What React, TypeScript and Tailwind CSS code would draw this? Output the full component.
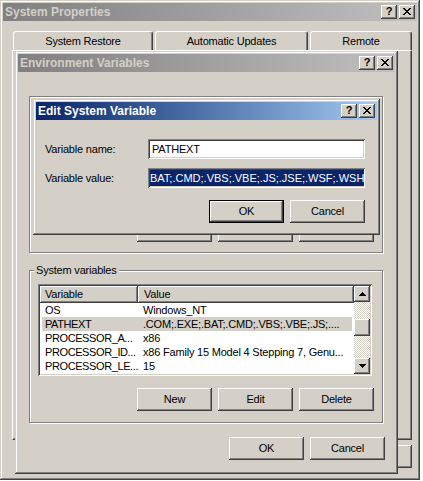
import React from "react";

const raised =
  "shadow-[inset_-1px_-1px_#404040,inset_1px_1px_#ffffff,inset_-2px_-2px_#808080,inset_2px_2px_#d4d0c8]";
const frame =
  "shadow-[inset_-1px_-1px_#404040,inset_1px_1px_#d4d0c8,inset_-2px_-2px_#808080,inset_2px_2px_#ffffff]";
const sunken =
  "shadow-[inset_1px_1px_#808080,inset_-1px_-1px_#ffffff,inset_2px_2px_#404040,inset_-2px_-2px_#d4d0c8]";

function CloseGlyph() {
  return (
    <svg width="8" height="7" viewBox="0 0 8 7" shapeRendering="crispEdges">
      <g fill="#000">
        <rect x="0" y="0" width="2" height="1" />
        <rect x="6" y="0" width="2" height="1" />
        <rect x="1" y="1" width="2" height="1" />
        <rect x="5" y="1" width="2" height="1" />
        <rect x="2" y="2" width="4" height="1" />
        <rect x="3" y="3" width="2" height="1" />
        <rect x="2" y="4" width="4" height="1" />
        <rect x="1" y="5" width="2" height="1" />
        <rect x="5" y="5" width="2" height="1" />
        <rect x="0" y="6" width="2" height="1" />
        <rect x="6" y="6" width="2" height="1" />
      </g>
    </svg>
  );
}

function Arrow({ down }: { down?: boolean }) {
  return (
    <svg
      width="7"
      height="4"
      viewBox="0 0 7 4"
      shapeRendering="crispEdges"
      className={down ? "rotate-180" : ""}
    >
      <g fill="#000">
        <rect x="3" y="0" width="1" height="1" />
        <rect x="2" y="1" width="3" height="1" />
        <rect x="1" y="2" width="5" height="1" />
        <rect x="0" y="3" width="7" height="1" />
      </g>
    </svg>
  );
}

function TitleBtn({ children, className = "" }: { children: React.ReactNode; className?: string }) {
  return (
    <div
      className={`w-[16px] h-[14px] bg-[#d4d0c8] ${raised} flex items-center justify-center pb-[1px] ${className}`}
    >
      {children}
    </div>
  );
}

function TitleBar({ title, active }: { title: string; active?: boolean }) {
  return (
    <div
      className={`flex items-center h-[18px] pl-[2px] pr-[2px] shrink-0 ${
        active
          ? "bg-linear-to-r from-[#0a246a] to-[#a6caf0] text-white"
          : "bg-linear-to-r from-[#808080] to-[#c0c0c0] text-[#d4d0c8]"
      }`}
    >
      <span className="flex-1 font-bold text-[12px] leading-none tracking-normal">{title}</span>
      <TitleBtn>
        <span className="text-black font-bold text-[11px] leading-none">?</span>
      </TitleBtn>
      <TitleBtn className="ml-[2px]">
        <CloseGlyph />
      </TitleBtn>
    </div>
  );
}

function Button({ children, isDefault }: { children?: React.ReactNode; isDefault?: boolean }) {
  if (isDefault) {
    return (
      <div className="w-[75px] h-[23px] border border-black">
        <div className={`w-full h-full bg-[#d4d0c8] ${raised} flex items-center justify-center`}>
          {children}
        </div>
      </div>
    );
  }
  return (
    <div className={`w-[75px] h-[23px] bg-[#d4d0c8] ${raised} flex items-center justify-center`}>
      {children}
    </div>
  );
}

function Tab({ w, children }: { w: string; children: React.ReactNode }) {
  return (
    <div
      className={`${w} h-[19px] border-t border-l border-white border-r border-r-[#404040] rounded-tl-[3px] rounded-tr-[3px] shadow-[inset_-1px_0_#808080] flex items-center justify-center`}
    >
      {children}
    </div>
  );
}

function Group({
  label,
  className = "",
  children,
}: {
  label?: string;
  className?: string;
  children?: React.ReactNode;
}) {
  return (
    <div
      className={`relative border border-[#808080] shadow-[inset_1px_1px_#ffffff,1px_1px_#ffffff] ${className}`}
    >
      {label && (
        <span className="absolute left-[4px] top-[-8px] px-[2px] bg-[#d4d0c8] leading-[14px]">
          {label}
        </span>
      )}
      {children}
    </div>
  );
}

const rows = [
  { name: "OS", value: "Windows_NT" },
  { name: "PATHEXT", value: ".COM;.EXE;.BAT;.CMD;.VBS;.VBE;.JS;....", selected: true },
  { name: "PROCESSOR_A...", value: "x86" },
  { name: "PROCESSOR_ID...", value: "x86 Family 15 Model 4 Stepping 7, Genu..." },
  { name: "PROCESSOR_LE...", value: "15" },
];

function Scrollbar() {
  return (
    <div className="w-[16px] flex flex-col shrink-0">
      <div className={`h-[16px] bg-[#d4d0c8] ${raised} flex items-center justify-center`}>
        <Arrow />
      </div>
      <div className="flex-1 flex flex-col bg-[image:repeating-conic-gradient(#ffffff_0%_25%,#d4d0c8_0%_50%)] bg-[length:2px_2px]">
        <div className="h-[17px]" />
        <div className={`h-[17px] bg-[#d4d0c8] ${raised}`} />
      </div>
      <div className={`h-[16px] bg-[#d4d0c8] ${raised} flex items-center justify-center`}>
        <Arrow down />
      </div>
    </div>
  );
}

function ListView({ withRows }: { withRows?: boolean }) {
  return (
    <div className={`ml-[8px] mt-[13px] w-[334px] h-[92px] p-[2px] bg-white ${sunken} flex`}>
      <div className="flex-1 flex flex-col overflow-hidden">
        <div className="flex h-[17px] shrink-0">
          <div className={`w-[98px] bg-[#d4d0c8] ${raised} pl-[5px] flex items-center`}>
            {withRows ? "Variable" : ""}
          </div>
          <div className={`flex-1 bg-[#d4d0c8] ${raised} pl-[6px] flex items-center`}>
            {withRows ? "Value" : ""}
          </div>
        </div>
        {withRows &&
          rows.map((r) => (
            <div
              key={r.name}
              className={`flex h-[14px] items-center mx-[2px] whitespace-nowrap ${
                r.selected ? "bg-[#d4d0c8]" : ""
              }`}
            >
              <div className="w-[96px] pl-[3px] tracking-[-0.4px]">{r.name}</div>
              <div className="flex-1 pl-[5px] overflow-hidden">{r.value}</div>
            </div>
          ))}
      </div>
      <Scrollbar />
    </div>
  );
}

export default function App() {
  return (
    <div className="relative w-[423px] h-[481px] overflow-hidden bg-white font-['Liberation_Sans',Arial,sans-serif] text-[11px] tracking-[-0.2px] text-black">
      {/* System Properties */}
      <div className={`absolute left-0 top-0 w-[420px] h-[480px] p-[3px] bg-[#d4d0c8] ${frame}`}>
        <TitleBar title="System Properties" />
        <div className="mt-[10px] ml-[10px] flex gap-[2px]">
          <Tab w="w-[140px]">System Restore</Tab>
          <Tab w="w-[153px]">Automatic Updates</Tab>
          <Tab w="w-[102px]">Remote</Tab>
        </div>
        <div className="ml-[9px] w-[400px] h-[390px] border-t border-l border-white border-r border-b border-r-[#404040] border-b-[#404040] shadow-[inset_-1px_-1px_#808080]" />
        <div className="mt-[5px] ml-[9px] w-[400px] flex justify-end gap-[6px]">
          <Button />
          <Button />
          <Button />
        </div>
      </div>

      {/* Environment Variables */}
      <div
        className={`absolute left-[15px] top-[51px] w-[383px] h-[423px] p-[3px] bg-[#d4d0c8] ${frame} flex flex-col`}
      >
        <TitleBar title="Environment Variables" />
        <Group className="ml-[11px] mt-[24px] w-[354px] h-[157px] shrink-0">
          <ListView />
          <div className="mt-[17px] ml-[107px] flex gap-[6px]">
            <Button />
            <Button />
            <Button />
          </div>
        </Group>
        <Group label="System variables" className="ml-[11px] mt-[17px] w-[354px] h-[153px] shrink-0">
          <ListView withRows />
          <div className="mt-[12px] ml-[107px] flex gap-[6px]">
            <Button>New</Button>
            <Button>Edit</Button>
            <Button>Delete</Button>
          </div>
        </Group>
        <div className="mt-[14px] ml-[211px] flex gap-[6px]">
          <Button>OK</Button>
          <Button>Cancel</Button>
        </div>
      </div>

      {/* Edit System Variable */}
      <div
        className={`absolute left-[33px] top-[99px] w-[347px] h-[136px] p-[3px] bg-[#d4d0c8] ${frame} flex flex-col`}
      >
        <TitleBar title="Edit System Variable" active />
        <div className="mt-[19px] ml-[9px] flex items-center">
          <div className="w-[103px]">Variable name:</div>
          <div className={`w-[217px] h-[20px] bg-white ${sunken} flex items-center pl-[4px]`}>
            PATHEXT
          </div>
        </div>
        <div className="mt-[9px] ml-[9px] flex items-center">
          <div className="w-[103px]">Variable value:</div>
          <div className={`w-[217px] h-[20px] bg-white ${sunken} p-[2px] flex`}>
            <span className="flex-1 h-full whitespace-nowrap bg-[#0a246a] text-white flex items-center justify-center tracking-[0px]">
              BAT;.CMD;.VBS;.VBE;.JS;.JSE;.WSF;.WSH
            </span>
          </div>
        </div>
        <div className="mt-[12px] ml-[173px] flex gap-[6px]">
          <Button isDefault>OK</Button>
          <Button>Cancel</Button>
        </div>
      </div>
    </div>
  );
}
